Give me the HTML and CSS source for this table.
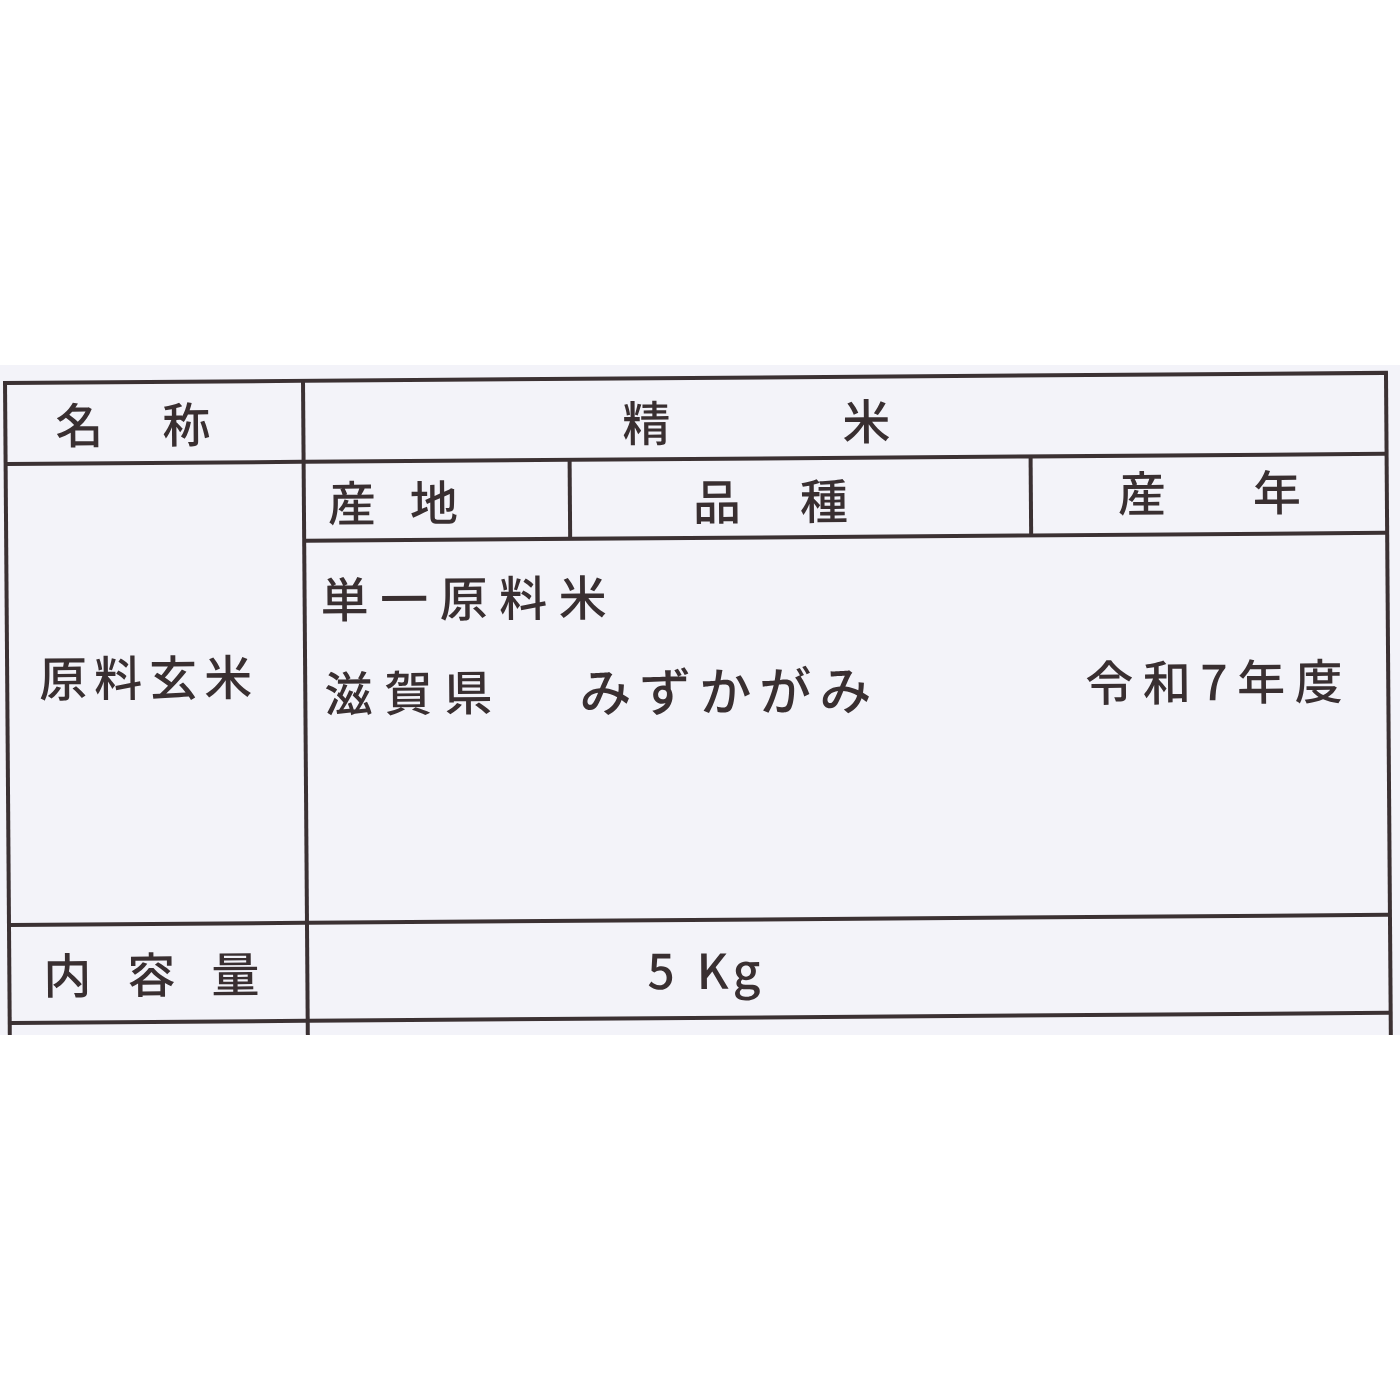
FILE: index.html
```html
<!DOCTYPE html>
<html lang="ja">
<head>
<meta charset="utf-8">
<title>精米 表示</title>
<link rel="stylesheet" href="styles.css">
</head>
<body>
<div class="page">
  <div class="band">
    <div class="label">
      <div class="cell name-h"><span class="t ls-name">名称</span></div>
      <div class="cell name-v"><span class="t ls-rice">精米</span></div>
      <div class="cell raw-h"><span class="t ls-raw">原料玄米</span></div>
      <div class="cell origin-h"><span class="t ls-origin">産地</span></div>
      <div class="cell variety-h"><span class="t ls-variety">品種</span></div>
      <div class="cell year-h"><span class="t ls-year">産年</span></div>
      <div class="cell raw-v">
        <div class="line single">単一原料米</div>
        <div class="line detail">
          <span class="pref">滋賀県</span>
          <span class="variety">みずかがみ</span>
          <span class="year">令和7年度</span>
        </div>
      </div>
      <div class="cell qty-h"><span class="t ls-qty">内容量</span></div>
      <div class="cell qty-v"><span class="qty"><span class="num">5</span>Kg</span></div>
      <div class="cell blank-h"></div>
      <div class="cell blank-v"></div>
    </div>
  </div>
</div>
</body>
</html>
```
FILE: styles.css
```css
html, body {
  margin: 0;
  padding: 0;
  background: #ffffff;
}

body {
  font-family: "Noto Sans CJK JP", "Noto Sans", sans-serif;
  color: #392f31;
}

.page {
  width: 1400px;
  height: 1400px;
  padding-top: 365px;
  box-sizing: border-box;
}

.band {
  height: 670px;
  background: #f3f3f9;
  overflow: hidden;
  padding: 16px 0 0 3px;
  box-sizing: border-box;
}

.label {
  display: grid;
  grid-template-columns: 294px 262px 457px 352px;
  grid-template-rows: 77px 75px 378px 94px 120px;
  gap: 4px;
  padding: 4px;
  width: max-content;
  background: #3b3133;
  transform-origin: 0 0;
  transform: rotate(-0.42deg);
}

.cell {
  background: #f3f3f9;
  display: flex;
  align-items: center;
  font-size: 48px;
  font-weight: 500;
  line-height: 1.2;
  white-space: nowrap;
}

.t { display: block; }

.name-h { grid-column: 1; grid-row: 1; padding-left: 48px; }
.ls-name { letter-spacing: 59px; }

.name-v { grid-column: 2 / span 3; grid-row: 1; padding-left: 317px; padding-top: 4px; }
.ls-rice { letter-spacing: 172px; }

.raw-h {
  grid-column: 1;
  grid-row: 2 / span 2;
  align-items: flex-start;
  padding: 182px 0 0 30px;
}
.ls-raw { letter-spacing: 7px; }

.origin-h { grid-column: 2; grid-row: 2; padding-left: 22px; }
.ls-origin { letter-spacing: 34px; }

.variety-h { grid-column: 3; grid-row: 2; padding-left: 121px; padding-top: 3px; }
.ls-variety { letter-spacing: 59px; }

.year-h { grid-column: 4; grid-row: 2; padding-left: 85px; padding-bottom: 8px; }
.ls-year { letter-spacing: 87px; }

.raw-v {
  grid-column: 2 / span 3;
  grid-row: 3;
  flex-direction: column;
  align-items: flex-start;
  padding: 26px 0 0 14px;
}

.line { height: 57.6px; }

.single { letter-spacing: 11.5px; }

.detail {
  display: flex;
  align-items: flex-start;
  margin-top: 36px;
}

.pref { margin-left: 3px; letter-spacing: 12px; }
.variety { margin-left: 75px; font-size: 52px; letter-spacing: 8px; margin-top: -2px; }
.year { margin-left: 206px; letter-spacing: 9.5px; margin-top: -5px; }

.qty-h { grid-column: 1; grid-row: 4; padding-left: 32px; }
.ls-qty { letter-spacing: 36px; }

.qty-v { grid-column: 2 / span 3; grid-row: 4; padding-left: 338px; }
.qty { font-size: 48px; letter-spacing: 4px; }
.num { margin-right: 18px; }

.blank-h { grid-column: 1; grid-row: 5; }
.blank-v { grid-column: 2 / span 3; grid-row: 5; }
```
